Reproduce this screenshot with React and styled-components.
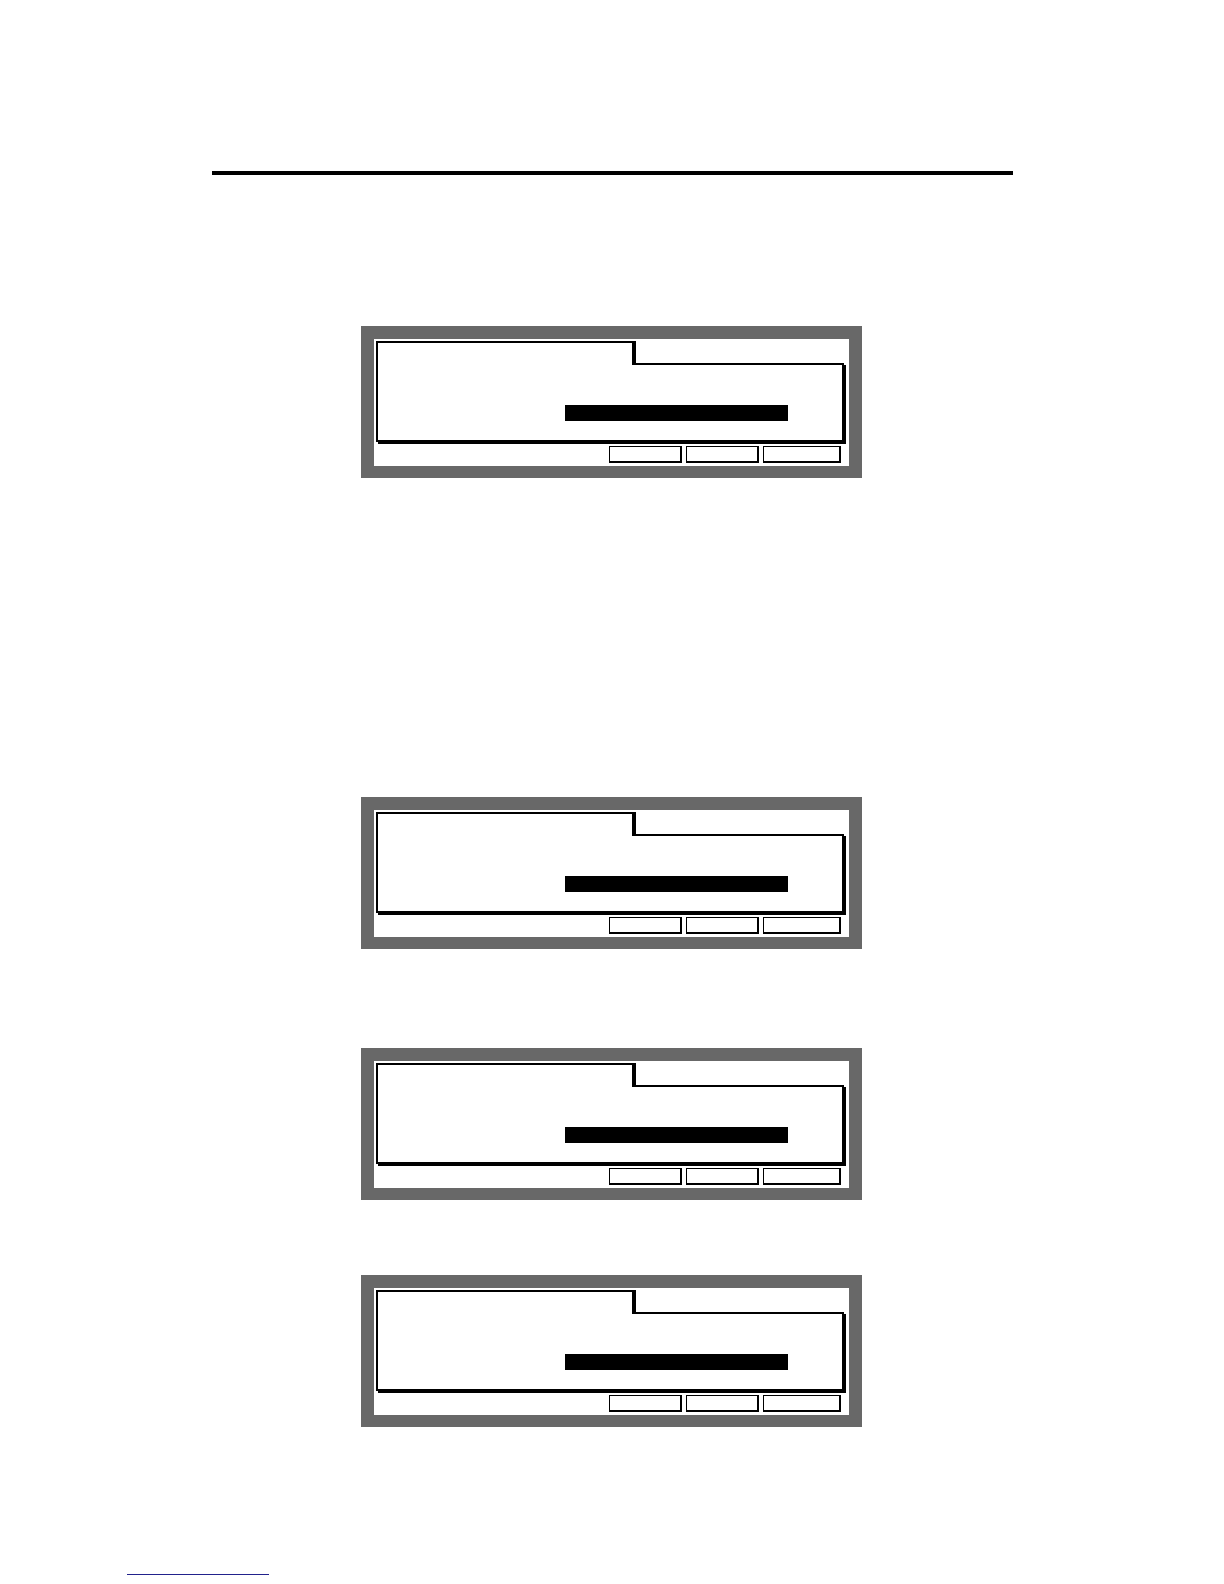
import React from "react";
import styled, { createGlobalStyle } from "styled-components";

const GlobalStyle = createGlobalStyle`
  html, body {
    margin: 0;
    padding: 0;
    background: #ffffff;
    font-family: "Liberation Sans", Arial, sans-serif;
  }
`;

const Page = styled.div`
  width: 1224px;
  min-height: 1584px;
  display: flex;
  flex-direction: column;
  align-items: flex-start;
  padding-top: 171px;
  box-sizing: border-box;
  background: #ffffff;
`;

const HeaderRule = styled.div`
  margin-left: 212px;
  width: 801px;
  height: 4px;
  background: #000000;
`;

const Panel = styled.section`
  margin-top: ${(p) => p.$top}px;
  margin-left: 361px;
  width: 501px;
  height: 152px;
  box-sizing: border-box;
  background: #686868;
  padding: 13px 13px 12px 13px;
`;

const Lcd = styled.div`
  width: 100%;
  height: 100%;
  background: #ffffff;
  display: flex;
  flex-direction: column;
  padding: 2px 0 3px 2px;
  box-sizing: border-box;
`;

const Screen = styled.div`
  width: 468px;
  display: flex;
  flex-direction: column;
  align-items: flex-start;
`;

const Tab = styled.div`
  position: relative;
  z-index: 1;
  width: 258px;
  height: 24px;
  margin-bottom: -2px;
  box-sizing: border-box;
  background: #ffffff;
  border: 2px solid #000000;
  border-bottom: none;
  box-shadow: 2px 0 0 #000000;
`;

const Body = styled.div`
  width: 468px;
  height: 79px;
  box-sizing: border-box;
  border: 2px solid #000000;
  box-shadow: 2px 2px 0 #000000;
  background: #ffffff;
  padding: 40px 0 0 187px;
`;

const ValueBar = styled.div`
  width: 223px;
  height: 16px;
  background: #000000;
`;

const SoftKeys = styled.div`
  margin-top: 4px;
  display: flex;
  justify-content: flex-end;
  gap: 4px;
  padding-right: 8px;
`;

const SoftKey = styled.div`
  width: ${(p) => p.$w}px;
  height: 17px;
  box-sizing: border-box;
  background: #ffffff;
  border-top: 1px solid #000000;
  border-left: 1px solid #000000;
  border-right: 2px solid #000000;
  border-bottom: 2px solid #000000;
`;

const Spacer = styled.div`
  height: ${(p) => p.$h}px;
`;

const FooterLink = styled.div`
  margin-left: 127px;
  width: 142px;
  height: 1px;
  background: #22228c;
`;

function LcdPanel({ top }) {
  return (
    <Panel $top={top}>
      <Lcd>
        <Screen>
          <Tab />
          <Body>
            <ValueBar />
          </Body>
        </Screen>
        <SoftKeys>
          <SoftKey $w={73} />
          <SoftKey $w={73} />
          <SoftKey $w={78} />
        </SoftKeys>
      </Lcd>
    </Panel>
  );
}

const panels = [151, 319, 99, 75];

export default function App() {
  return (
    <>
      <GlobalStyle />
      <Page>
        <HeaderRule />
        {panels.map((t, i) => (
          <LcdPanel key={i} top={t} />
        ))}
        <Spacer $h={147} />
        <FooterLink />
      </Page>
    </>
  );
}
